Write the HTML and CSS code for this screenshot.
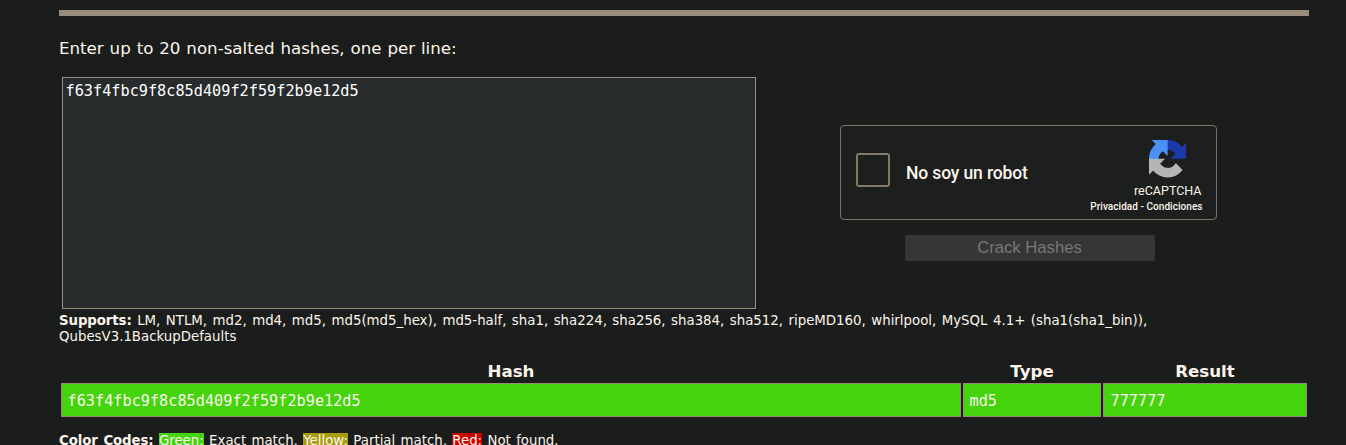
FILE: index.html
```html
<!DOCTYPE html>
<html lang="en">
<head>
<meta charset="utf-8">
<title>Hash Cracker</title>
<link rel="stylesheet" href="styles.css">
</head>
<body>
<main class="page">
  <p class="intro"><span class="intro-text">Enter up to 20 non-salted hashes, one per line:</span></p>
  <form class="form">
    <textarea class="hashes" spellcheck="false">f63f4fbc9f8c85d409f2f59f2b9e12d5</textarea>
    <div class="side">
      <div class="captcha">
        <span class="check"></span>
        <span class="robot">No soy un robot</span>
        <div class="brand">
          <svg class="logo" viewBox="0 0 64 64" aria-hidden="true">
            <path fill="#1c3aa9" d="M64 31.955l-.033-1.37V4.687l-7.16 7.16C50.948 4.674 42.033.093 32.05.093c-10.4 0-19.622 4.96-25.458 12.64l11.736 11.86a15.55 15.55 0 0 1 4.754-5.334c2.05-1.6 4.952-2.906 8.968-2.906.485 0 .86.057 1.135.163 4.976.393 9.288 3.14 11.828 7.124l-8.307 8.307L64 31.953"/>
            <path fill="#4a90f5" d="M31.862.094l-1.37.033H4.594l7.16 7.16C4.58 13.147 0 22.06 0 32.046c0 10.4 4.96 19.622 12.64 25.458L24.5 45.768a15.55 15.55 0 0 1-5.334-4.754c-1.6-2.05-2.906-4.952-2.906-8.968 0-.485.057-.86.163-1.135.393-4.976 3.14-9.288 7.124-11.828l8.307 8.307L31.86.095"/>
            <path fill="#b5b5b5" d="M.001 32.045l.033 1.37v25.898l7.16-7.16c5.86 7.173 14.774 11.754 24.76 11.754 10.4 0 19.622-4.96 25.458-12.64l-11.736-11.86a15.55 15.55 0 0 1-4.754 5.334c-2.05 1.6-4.952 2.906-8.968 2.906-.485 0-.86-.057-1.135-.163-4.976-.393-9.288-3.14-11.828-7.124l8.307-8.307c-10.522.04-22.4.066-27.295-.005"/>
          </svg>
          <span class="name">reCAPTCHA</span>
          <span class="links">Privacidad - Condiciones</span>
        </div>
      </div>
      <button class="crack" type="submit" disabled>Crack Hashes</button>
    </div>
  </form>
  <p class="supports"><b>Supports:</b> LM, NTLM, md2, md4, md5, md5(md5_hex), md5-half, sha1, sha224, sha256, sha384, sha512, ripeMD160, whirlpool, MySQL 4.1+ (sha1(sha1_bin)),<br>QubesV3.1BackupDefaults</p>
  <div class="results">
    <div class="head">Hash</div><div class="head">Type</div><div class="head">Result</div>
    <div class="cell">f63f4fbc9f8c85d409f2f59f2b9e12d5</div><div class="cell">md5</div><div class="cell last">777777</div>
  </div>
  <p class="codes"><b>Color Codes:</b> <span class="green">Green:</span> Exact match, <span class="yellow">Yellow:</span> Partial match, <span class="red">Red:</span> Not found.</p>
</main>
</body>
</html>
```

FILE: styles.css
```css
* { box-sizing: border-box; }
html, body { height: 445px; overflow: hidden; }
body {
  margin: 0;
  background: #1b1d1c;
  color: #fcf5eb;
  font-family: Verdana, "DejaVu Sans", sans-serif;
}
p { margin: 0; white-space: nowrap; }
.page {
  width: 1250px;
  margin: 10px 0 0 59px;
  border-top: 6px solid #998c7a;
}
.intro {
  height: 61px;
  padding-top: 21px;
  font-size: 16.67px;
  line-height: 23px;
  word-spacing: 0.6px;
}
.form { display: flex; height: 232px; }
.hashes {
  width: 694px;
  height: 232px;
  margin: 0 0 0 3px;
  padding: 3px 2.5px;
  border: 1px solid #998c7a;
  border-radius: 0;
  outline: 0;
  resize: none;
  overflow: hidden;
  background: #272b2c;
  color: #fff;
  font: 15.23px/20px "DejaVu Sans Mono", monospace;
}
.side {
  display: flex;
  flex-direction: column;
  align-items: center;
  width: 377px;
  margin: 48px 0 0 84px;
}
.captcha {
  display: flex;
  width: 377px;
  height: 95px;
  border: 1px solid #7e7363;
  border-radius: 4px;
  background: #1d1f1e;
  font-family: Roboto, sans-serif;
}
.check {
  width: 34px;
  height: 34px;
  margin: 27px 16px 0 15px;
  border: 2px solid #857967;
  border-radius: 3px;
}
.robot {
  width: 180px;
  padding-top: 36px;
  font-size: 17.5px;
  font-weight: 500;
  letter-spacing: -0.13px;
  line-height: 22px;
  white-space: nowrap;
}
.brand {
  display: flex;
  flex-direction: column;
  align-items: flex-end;
  width: 116px;
  padding-top: 14px;
}
.logo { width: 37.5px; height: 37.5px; margin-right: 16px; }
.name { margin: 5px 0.5px 0 0; font-size: 12.5px; line-height: 16px; }
.links {
  margin: 1px -0.5px 0 0;
  font-size: 10px;
  font-weight: 500;
  letter-spacing: 0.05px;
  line-height: 14px;
  white-space: nowrap;
}
.crack {
  width: 250px;
  height: 26px;
  margin: 15px 0 0 3px;
  padding: 0 1px 0 0;
  border: 0;
  border-radius: 2px;
  background: #363636;
  color: #777;
  font: 16.67px/24px "Liberation Sans", Arial, sans-serif;
}
.supports {
  padding-top: 4px;
  font-size: 13.33px;
  line-height: 16px;
  word-spacing: 1.25px;
}
.supports b, .codes b { letter-spacing: -0.1px; }
.results {
  display: grid;
  grid-template-columns: 900px 138px 204px;
  grid-template-rows: 20px 34px;
  column-gap: 2px;
  padding: 18px 0 0 2px;
}
.head {
  text-align: center;
  font-weight: bold;
  font-size: 16.67px;
  line-height: 17px;
}
.cell {
  padding: 1px 0 0 5.5px;
  border: 1px solid #998c7a;
  background: #44d30d;
  font: 15.23px/33px "DejaVu Sans Mono", monospace;
}
.last { padding-left: 6.5px; }
.codes {
  padding-top: 16px;
  font-size: 13.33px;
  line-height: 16px;
  word-spacing: 1.1px;
}
.green { background: #44d30d; }
.yellow { background: #a89c0b; }
.red { background: #cc0504; }
```
